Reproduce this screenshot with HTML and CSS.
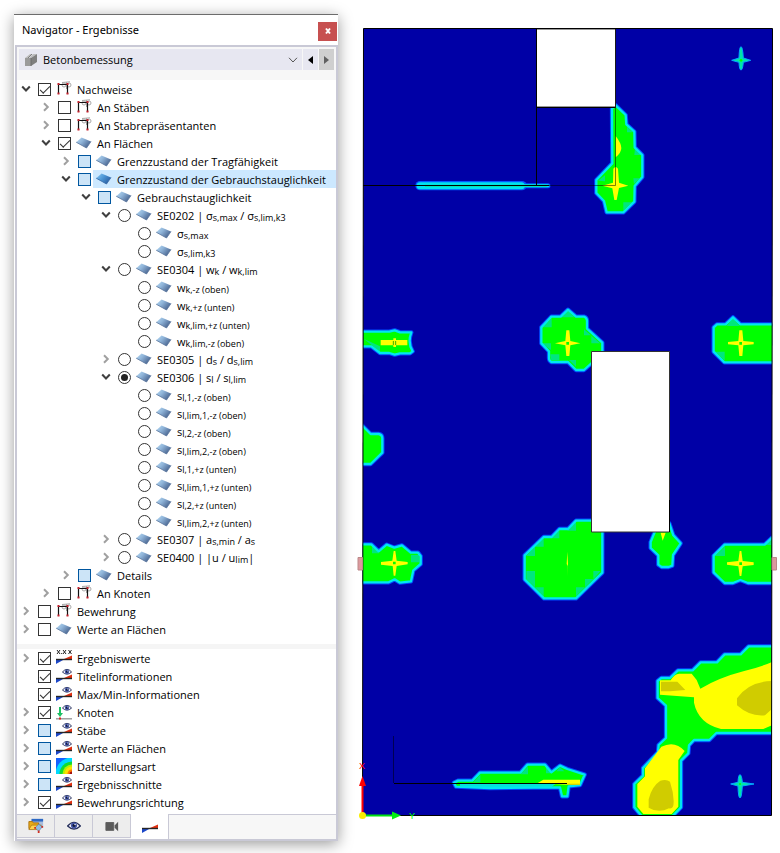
FILE: index.html
```html
<!DOCTYPE html>
<html lang="de">
<head>
<meta charset="utf-8">
<title>Navigator - Ergebnisse</title>
<link rel="stylesheet" href="styles.css">
</head>
<body>
<svg class="defs" aria-hidden="true">
  <defs>
    <linearGradient id="blueFace" x1="0" y1="0" x2="1" y2="0.6">
      <stop offset="0" stop-color="#b9dcf4"/><stop offset="0.45" stop-color="#8fb4d9"/><stop offset="1" stop-color="#49648f"/>
    </linearGradient>
    <linearGradient id="brightFace" x1="0" y1="0" x2="1" y2="0.6">
      <stop offset="0" stop-color="#8ccaf4"/><stop offset="0.5" stop-color="#4d97d6"/><stop offset="1" stop-color="#2a5fa3"/>
    </linearGradient>
    <symbol id="open" viewBox="0 0 10 8"><path d="M1.2 1.5 5 5.5 8.800 1.500" fill="none" stroke="#404040" stroke-width="2"/></symbol>
    <symbol id="closed" viewBox="0 0 10 10"><path d="M3 1.200 6.800 5 3 8.800" fill="none" stroke="#a0a0a0" stroke-width="2"/></symbol>
    <symbol id="surface" viewBox="0 0 16 16"><path d="M.2 7.200 5.600 2.500 15 6.500 10.500 13Z" fill="url(#blueFace)"/><path d="M.2 7.200 10.500 13 15 6.500" fill="none" stroke="#58749c" stroke-width=".8"/></symbol>
    <symbol id="surfaceOn" viewBox="0 0 16 16"><path d="M.2 7.200 5.600 2.500 15 6.500 10.500 13Z" fill="url(#brightFace)"/><path d="M.2 7.200 10.500 13 15 6.500" fill="none" stroke="#3567a5" stroke-width=".8"/></symbol>
    <symbol id="frame" viewBox="0 0 16 16">
      <g fill="none" stroke="#a9a9a9"><circle cx="8" cy="4" r="2"/><circle cx="13" cy="4" r="2"/><path d="M6 1.500 14 .8M10.500 1v7"/></g>
      <path d="M2.500 13V3.500H11.500V13" fill="none" stroke="#111" stroke-width="1.200"/>
      <path d="M1.500 2h2v2h-2zM10.500 2h2v2h-2zM1.500 11.500h2v2h-2zM10.500 11.500h2v2h-2z" fill="#c4202c"/>
    </symbol>
    <symbol id="wedge" viewBox="0 0 16 16"><path d="M0 9.500H8L0 14Z" fill="#1c47c8"/><path d="M8 9 16 5.500V9Z" fill="#e03010"/><path d="M0 9.500H16" stroke="#252525" stroke-width="1.400"/></symbol>
    <symbol id="eye" viewBox="0 0 16 12"><path d="M.7 6Q8-2.500 15.300 6 8 13 .7 6Z" fill="#f4f4fa" stroke="#26305c" stroke-width="1.500"/><circle cx="8" cy="5.500" r="3.500" fill="#4456a8"/><circle cx="8" cy="5.500" r="1.700" fill="#101838"/><circle cx="9.200" cy="4.200" r=".8" fill="#fff"/></symbol>
    <symbol id="wedgeEye" viewBox="0 0 16 16"><use href="#wedge" width="16" height="16" y="1"/><use href="#eye" x="6" y="0" width="10" height="8"/></symbol>
    <symbol id="values" viewBox="0 0 16 16"><use href="#wedge" width="16" height="16"/><path d="M1 0l3 4M4 0 1 4M7 0l3 4M10 0 7 4M12.500 0l3 4M15.500 0l-3 4M5.200 3.500h1" fill="none" stroke="#222" stroke-width="1"/></symbol>
    <symbol id="node" viewBox="0 0 16 16"><path d="M3 3h2v6h2L4 13 1 9h2z" fill="#1cc064"/><path d="M0 14.800h16" stroke="#999" stroke-width="1.400"/><path d="M3 13.500h2v2H3z" fill="#d22"/><use href="#eye" x="6" y="0" width="10" height="8"/></symbol>
    <symbol id="colors" viewBox="0 0 16 16"><path d="M0 0h16v16H0z" fill="#1460ff"/><circle cx="16" cy="16" r="16.500" fill="#00d8ff"/><circle cx="16" cy="16" r="12.500" fill="#10dc30"/><circle cx="16" cy="16" r="9.500" fill="#b8f000"/><circle cx="16" cy="16" r="7.500" fill="#ffe000"/><circle cx="16" cy="16" r="4.500" fill="#ff7a00"/><circle cx="16" cy="16" r="2.500" fill="#a01010"/></symbol>
    <symbol id="beam" viewBox="0 0 14 14"><path d="M1 5h6v8H1z" fill="#9a9a9a"/><path d="M1 5 6 1h2L4 5zM5 5l4-4h4L7 5z" fill="#bdbdbd"/><path d="M7 5l6-4v8l-6 4z" fill="#808080"/><path d="M4 5 8 1M7 5v8" stroke="#686868" fill="none" stroke-width=".8"/></symbol>
    <symbol id="folder" viewBox="0 0 18 18"><path d="M4 1h13v10H4z" fill="#a8bcdc"/><path d="M4 1h13v3H4z" fill="#2c68c4"/><path d="M1 4h4l1 1.500h6V12H1z" fill="#e8ac18" stroke="#a86c08"/><path d="M4 8h11l-3 5H1z" fill="#ffd450" stroke="#a86c08" stroke-width=".8"/><path d="M8 11l4-4 4 3-4 5z" fill="#8fbce4" stroke="#4a79a8" stroke-width=".6"/><path d="M7 10h2v2H7zM15 9h2v2h-2zM11 14h2v3h-2z" fill="#d03020"/></symbol>
    <symbol id="camera" viewBox="0 0 16 12"><path d="M1 2h9v9H1z" fill="#5b5b5b" stroke="#5b5b5b" stroke-linejoin="round"/><path d="M11 5.500 15 1v11l-4-4z" fill="#5b5b5b"/></symbol>
  </defs>
</svg>

<aside class="panel">
  <header class="title"><h1>Navigator - Ergebnisse</h1><button class="close" aria-label="Schließen"><svg viewBox="0 0 8 8"><path d="M2 1.500l4 5M6 1.500l-4 5"/></svg></button></header>

  <div class="body">
    <div class="toolbar">
      <div class="combo">
        <svg class="beam"><use href="#beam"/></svg>
        <select aria-label="Bemessung"><option>Betonbemessung</option></select>
        <svg class="arrow" viewBox="0 0 10 6"><path d="M1 .8 5 5 9 .8"/></svg>
      </div>
      <button class="step" aria-label="Zurück"><svg viewBox="0 0 5 8"><path d="M5 0v8L0 4z"/></svg></button>
      <button class="step next" aria-label="Weiter"><svg viewBox="0 0 5 8"><path d="M0 0v8l5-4z"/></svg></button>
    </div>

    <ul class="tree">
      <li><div class="row"><button aria-label="Zuklappen"><svg><use href="#open"/></svg></button><label><input type="checkbox" checked><span class="cap"><svg><use href="#frame"/></svg><span>Nachweise</span></span></label></div>
        <ul>
          <li><div class="row"><button aria-label="Aufklappen"><svg><use href="#closed"/></svg></button><label><input type="checkbox"><span class="cap"><svg><use href="#frame"/></svg><span>An Stäben</span></span></label></div></li>
          <li><div class="row"><button aria-label="Aufklappen"><svg><use href="#closed"/></svg></button><label><input type="checkbox"><span class="cap"><svg><use href="#frame"/></svg><span>An Stabrepräsentanten</span></span></label></div></li>
          <li><div class="row"><button aria-label="Zuklappen"><svg><use href="#open"/></svg></button><label><input type="checkbox" checked><span class="cap"><svg><use href="#surface"/></svg><span>An Flächen</span></span></label></div>
            <ul>
              <li><div class="row"><button aria-label="Aufklappen"><svg><use href="#closed"/></svg></button><label><input type="checkbox" class="mixed"><span class="cap"><svg><use href="#surface"/></svg><span>Grenzzustand der Tragfähigkeit</span></span></label></div></li>
              <li><div class="row selected"><button aria-label="Zuklappen"><svg><use href="#open"/></svg></button><label><input type="checkbox" class="mixed"><span class="cap"><svg><use href="#surfaceOn"/></svg><span>Grenzzustand der Gebrauchstauglichkeit</span></span></label></div>
                <ul>
                  <li><div class="row"><button aria-label="Zuklappen"><svg><use href="#open"/></svg></button><label><input type="checkbox" class="mixed"><span class="cap"><svg><use href="#surface"/></svg><span>Gebrauchstauglichkeit</span></span></label></div>
                    <ul>
                      <li><div class="row"><button aria-label="Zuklappen"><svg><use href="#open"/></svg></button><label><input type="radio" name="result"><span class="cap"><svg><use href="#surface"/></svg><span>SE0202 | <i>σ</i><sub>s,max</sub> / <i>σ</i><sub>s,lim,k3</sub></span></span></label></div>
                        <ul>
                          <li><div class="row leaf"><label><input type="radio" name="result"><span class="cap"><svg><use href="#surface"/></svg><span><i>σ</i><sub>s,max</sub></span></span></label></div></li>
                          <li><div class="row leaf"><label><input type="radio" name="result"><span class="cap"><svg><use href="#surface"/></svg><span><i>σ</i><sub>s,lim,k3</sub></span></span></label></div></li>
                        </ul>
                      </li>
                      <li><div class="row"><button aria-label="Zuklappen"><svg><use href="#open"/></svg></button><label><input type="radio" name="result"><span class="cap"><svg><use href="#surface"/></svg><span>SE0304 | <i>w</i><sub>k</sub> / <i>w</i><sub>k,lim</sub></span></span></label></div>
                        <ul>
                          <li><div class="row leaf"><label><input type="radio" name="result"><span class="cap"><svg><use href="#surface"/></svg><span><i>w</i><sub>k,-z (oben)</sub></span></span></label></div></li>
                          <li><div class="row leaf"><label><input type="radio" name="result"><span class="cap"><svg><use href="#surface"/></svg><span><i>w</i><sub>k,+z (unten)</sub></span></span></label></div></li>
                          <li><div class="row leaf"><label><input type="radio" name="result"><span class="cap"><svg><use href="#surface"/></svg><span><i>w</i><sub>k,lim,+z (unten)</sub></span></span></label></div></li>
                          <li><div class="row leaf"><label><input type="radio" name="result"><span class="cap"><svg><use href="#surface"/></svg><span><i>w</i><sub>k,lim,-z (oben)</sub></span></span></label></div></li>
                        </ul>
                      </li>
                      <li><div class="row"><button aria-label="Aufklappen"><svg><use href="#closed"/></svg></button><label><input type="radio" name="result"><span class="cap"><svg><use href="#surface"/></svg><span>SE0305 | <i>d</i><sub>s</sub> / <i>d</i><sub>s,lim</sub></span></span></label></div></li>
                      <li><div class="row"><button aria-label="Zuklappen"><svg><use href="#open"/></svg></button><label><input type="radio" name="result" checked><span class="cap"><svg><use href="#surface"/></svg><span>SE0306 | <i>s</i><sub>l</sub> / <i>s</i><sub>l,lim</sub></span></span></label></div>
                        <ul>
                          <li><div class="row leaf"><label><input type="radio" name="result"><span class="cap"><svg><use href="#surface"/></svg><span><i>s</i><sub>l,1,-z (oben)</sub></span></span></label></div></li>
                          <li><div class="row leaf"><label><input type="radio" name="result"><span class="cap"><svg><use href="#surface"/></svg><span><i>s</i><sub>l,lim,1,-z (oben)</sub></span></span></label></div></li>
                          <li><div class="row leaf"><label><input type="radio" name="result"><span class="cap"><svg><use href="#surface"/></svg><span><i>s</i><sub>l,2,-z (oben)</sub></span></span></label></div></li>
                          <li><div class="row leaf"><label><input type="radio" name="result"><span class="cap"><svg><use href="#surface"/></svg><span><i>s</i><sub>l,lim,2,-z (oben)</sub></span></span></label></div></li>
                          <li><div class="row leaf"><label><input type="radio" name="result"><span class="cap"><svg><use href="#surface"/></svg><span><i>s</i><sub>l,1,+z (unten)</sub></span></span></label></div></li>
                          <li><div class="row leaf"><label><input type="radio" name="result"><span class="cap"><svg><use href="#surface"/></svg><span><i>s</i><sub>l,lim,1,+z (unten)</sub></span></span></label></div></li>
                          <li><div class="row leaf"><label><input type="radio" name="result"><span class="cap"><svg><use href="#surface"/></svg><span><i>s</i><sub>l,2,+z (unten)</sub></span></span></label></div></li>
                          <li><div class="row leaf"><label><input type="radio" name="result"><span class="cap"><svg><use href="#surface"/></svg><span><i>s</i><sub>l,lim,2,+z (unten)</sub></span></span></label></div></li>
                        </ul>
                      </li>
                      <li><div class="row"><button aria-label="Aufklappen"><svg><use href="#closed"/></svg></button><label><input type="radio" name="result"><span class="cap"><svg><use href="#surface"/></svg><span>SE0307 | <i>a</i><sub>s,min</sub> / <i>a</i><sub>s</sub></span></span></label></div></li>
                      <li><div class="row"><button aria-label="Aufklappen"><svg><use href="#closed"/></svg></button><label><input type="radio" name="result"><span class="cap"><svg><use href="#surface"/></svg><span>SE0400 | |<i>u</i> / <i>u</i><sub>lim</sub>|</span></span></label></div></li>
                    </ul>
                  </li>
                </ul>
              </li>
              <li><div class="row"><button aria-label="Aufklappen"><svg><use href="#closed"/></svg></button><label><input type="checkbox" class="mixed"><span class="cap"><svg><use href="#surface"/></svg><span>Details</span></span></label></div></li>
            </ul>
          </li>
          <li><div class="row"><button aria-label="Aufklappen"><svg><use href="#closed"/></svg></button><label><input type="checkbox"><span class="cap"><svg><use href="#frame"/></svg><span>An Knoten</span></span></label></div></li>
        </ul>
      </li>
      <li><div class="row"><button aria-label="Aufklappen"><svg><use href="#closed"/></svg></button><label><input type="checkbox"><span class="cap"><svg><use href="#frame"/></svg><span>Bewehrung</span></span></label></div></li>
      <li><div class="row"><button aria-label="Aufklappen"><svg><use href="#closed"/></svg></button><label><input type="checkbox"><span class="cap"><svg><use href="#surface"/></svg><span>Werte an Flächen</span></span></label></div></li>
    </ul>

    <ul class="tree options">
      <li><div class="row"><button aria-label="Aufklappen"><svg><use href="#closed"/></svg></button><label><input type="checkbox" checked><span class="cap"><svg><use href="#values"/></svg><span>Ergebniswerte</span></span></label></div></li>
      <li><div class="row leaf"><label><input type="checkbox" checked><span class="cap"><svg><use href="#wedgeEye"/></svg><span>Titelinformationen</span></span></label></div></li>
      <li><div class="row leaf"><label><input type="checkbox" checked><span class="cap"><svg><use href="#wedgeEye"/></svg><span>Max/Min-Informationen</span></span></label></div></li>
      <li><div class="row"><button aria-label="Aufklappen"><svg><use href="#closed"/></svg></button><label><input type="checkbox" checked><span class="cap"><svg><use href="#node"/></svg><span>Knoten</span></span></label></div></li>
      <li><div class="row"><button aria-label="Aufklappen"><svg><use href="#closed"/></svg></button><label><input type="checkbox" class="mixed"><span class="cap"><svg><use href="#wedgeEye"/></svg><span>Stäbe</span></span></label></div></li>
      <li><div class="row"><button aria-label="Aufklappen"><svg><use href="#closed"/></svg></button><label><input type="checkbox" class="mixed"><span class="cap"><svg><use href="#wedgeEye"/></svg><span>Werte an Flächen</span></span></label></div></li>
      <li><div class="row"><button aria-label="Aufklappen"><svg><use href="#closed"/></svg></button><label><input type="checkbox" class="mixed"><span class="cap"><svg><use href="#colors"/></svg><span>Darstellungsart</span></span></label></div></li>
      <li><div class="row"><button aria-label="Aufklappen"><svg><use href="#closed"/></svg></button><label><input type="checkbox" class="mixed"><span class="cap"><svg><use href="#wedgeEye"/></svg><span>Ergebnisschnitte</span></span></label></div></li>
      <li><div class="row"><button aria-label="Aufklappen"><svg><use href="#closed"/></svg></button><label><input type="checkbox" checked><span class="cap"><svg><use href="#wedgeEye"/></svg><span>Bewehrungsrichtung</span></span></label></div></li>
    </ul>

    <nav class="tabs">
      <button aria-label="Daten"><svg><use href="#folder"/></svg></button>
      <button aria-label="Anzeige"><svg class="low"><use href="#eye"/></svg></button>
      <button aria-label="Ansichten"><svg class="low"><use href="#camera"/></svg></button>
      <button class="active" aria-label="Ergebnisse"><svg><use href="#wedge"/></svg></button>
    </nav>
  </div>
</aside>

<main>
  <svg class="model" viewBox="350 0 430 853" role="img" aria-label="Ergebnisverlauf der Platte">
    <defs>
      <clipPath id="slab"><path d="M363.500 28.500H772.500L771.500 815.500H362.500Z"/></clipPath>
      <g id="areas">
        <g transform="translate(350 0) scale(.33333)">
          <path d="M797 316 827 345 829 373 853 395 854 442 877 465V531L854 558 853 605 820 637H770L762 603 739 579V540L787 490 786 326Z"/>
        </g>
        <g transform="translate(350 290) scale(.33333)">
          <path d="M20 125H118L134 121 150 127H184Q172 158 188 184L180 190H150L134 194 118 189H90L64 169H20Z"/>
          <path d="M20 390 62 432H86Q97 434 97 445V488L62 522H20Z"/>
          <path d="M574 112 604 80H632L654 59 678 80H702Q710 82 711 92V116L757 158V190L702 240H678L654 216H604Q597 212 597 204V184L574 160Z"/>
          <path d="M1091 112 1101 103H1127L1149 82 1171 103H1290V217H1123L1091 185Z"/>
          <path d="M20 763H64L86 784 110 764 133 773 156 766 182 788H204L212 798V822L190 841 183 874 150 878 134 868 116 877H20Z"/>
          <path d="M581 741H605L628 717H654L678 692H757V848L678 925H582L524 868V796Z"/>
          <path d="M925 700H958L970 736 992 760 969 795 967 827 956 831H935L925 824V796L902 774V756Z"/>
          <path d="M1124 764H1244L1290 720V879H1194L1171 870 1149 879H1124L1091 847V797Z"/>
        </g>
        <g transform="translate(350 630) scale(.33333)">
          <path d="M312 458 324 452H367L390 428H511L532 404H585L604 427 630 407 652 417 704 434 690 465 656 469 652 499H636L630 472 420 474 318 470Z"/>
          <path d="M1290 49H1196L1172 73H1124L1101 97H1052L1028 121H984L960 144H934L923 153V204L948 227V324L926 345 924 367 879 414V437L853 462V532L878 562H964L993 532V392L1015 370 1017 346 1032 330H1078L1099 309H1290Z"/>
        </g>
      </g>
    </defs>
    <path class="slab" d="M363.500 28.500H772.500L771.500 815.500H362.500Z"/>
    <g clip-path="url(#slab)">
      <use href="#areas" class="halo"/>
      <use href="#areas" class="zone"/>
      <g transform="translate(350 0) scale(.33333)">
        <path class="bar-halo" d="M210 557H516"/><path class="thin-halo" d="M516 557H594"/>
        <path class="bar" d="M210 557H514"/><path class="thin" d="M514 557H594"/><path class="core" d="M225 557H590"/>
        <path class="spark" d="M1173 140Q1178 140 1180 174L1202 181 1180 187Q1178 210 1173 210T1167 187L1145 181 1167 174Q1168 140 1173 140Z"/>
        <circle class="zone" cx="1173" cy="181" r="4"/>
        <path class="teal" d="M855 445 873 465H853ZM850 535H869L852 552ZM820 607H846L820 631ZM744 542 765 526V544ZM831 380 848 397H831Z"/>
      </g>
      <g transform="translate(350 290) scale(.33333)">
        <path class="teal" d="M654 63 673 82H634ZM605 85V112H580ZM575 160H603V180ZM601 193H628V211H604ZM702 118 750 160H724V136H702ZM657 210H678V230ZM1149 86 1168 108H1130ZM1096 185H1124V211ZM1245 765 1264 745V765ZM1096 798H1125V770ZM581 745V770H555ZM628 722V745H605ZM678 697V722H652ZM529 798 555 770V798ZM529 867V843H555V892ZM581 919V892H555ZM678 919V892H705ZM705 892V867H730ZM730 867V843H752ZM41 146 90 169V185ZM66 770 88 790H66ZM183 795H208V817H183Z"/>
      </g>
      <g transform="translate(350 630) scale(.33333)">
        <path class="teal" d="M370 457 391 434V457ZM512 433 534 410V433ZM588 410 604 430H588ZM619 424 630 412 643 424Z"/>
        <path class="cyan" d="M330 460H620L600 474H330Z"/>
      </g>
      <use href="#areas" class="edge"/>
      <g transform="translate(350 0) scale(.33333)">
        <path class="yellow" d="M797 408Q814 430 814 444T797 472Z"/>
        <path class="yellow" d="M790 506Q797 496 804 506L807 548 835 557 807 564 800 600H793L787 565 757 557 789 548Z"/>
      </g>
      <g transform="translate(350 290) scale(.33333)">
        <path class="yellow" d="M92 150H130V145H138V150H172V166H138V171H130V166H92Z"/><path class="dots" d="M130 153V165M137 153V165"/>
        <path class="yellow" d="M649 121H658L661 153 691 160 661 166 658 198H649L646 166 615 160 646 153Z"/>
        <path class="yellow" d="M1168 121H1177L1180 153 1211 156V163L1180 166 1177 198H1168L1165 166 1134 163V156L1165 153Z"/>
        <path class="yellow" d="M131 783H136L140 812 173 816V823L140 828 136 857H131L128 828 93 824V816L127 812Z"/>
        <path class="yellow" d="M1169 783H1174L1178 813 1211 817V825L1178 829 1174 858H1169L1165 829 1131 824V817L1165 813Z"/>
        <path class="yellow" d="M932 728H947L938 752ZM652 785 654 820 652 858 653 828 650 822Z"/>
        <path class="green-dot" d="M649 156H657V164H649ZM1168 156H1176V164H1168ZM129 815H137V823H129ZM1168 817H1176V825H1168Z"/>
      </g>
      <g transform="translate(350 630) scale(.33333)">
        <path class="yellow" d="M562 460 580 449H690V464H650ZM930 151H962Q973 132 988 131H1025L1040 150 1051 176Q1110 142 1180 124T1290 85V275L1240 297H1113Q1045 280 1032 218V202L930 194ZM934 350Q975 330 1004 363L985 390V530L965 552H880L862 530V462L885 439V415Z"/>
        <path class="olive" d="M933 155H982L1006 180 960 184H933ZM1161 205Q1195 155 1265 153V238L1245 256Q1200 261 1161 226ZM931 452Q950 447 960 455 970 485 971 512T957 535Q925 551 896 533V508Q905 469 931 452ZM650 461H690V464H650Z"/>
        <path class="spark" d="M1170 434Q1175 434 1177 457L1212 462 1177 468Q1175 504 1170 504T1164 468L1142 462 1164 457Q1165 434 1170 434Z"/>
        <circle class="zone" cx="1170" cy="462" r="3"/>
      </g>
    </g>
    <path class="opening" d="M536.500 29H615.500V107H536.500ZM591.500 351.500H669.500V532H591.500Z"/>
    <path class="line" d="M363.500 28.500H772.500L771.500 815.500H362.500ZM536.500 29V185M536.500 107.500H615.500M363 185.500H549M669.500 500V532M394 783.500H567"/>
    <path class="faint" d="M549 185.500H615.500V29M393.500 736V783"/>
    <path class="support" d="M358 557.500H362.500V570H358ZM772 557.500H776.500V570H772Z"/>
    <g class="axes">
      <path d="M362.500 815V785" stroke="#f00" stroke-width="2"/><path d="M362.500 776 366 786H359Z" fill="#f00"/>
      <path d="M362.500 815.500H393" stroke="#00e010" stroke-width="2"/><path d="M401 815.500 392 811.500V819.500Z" fill="#00f010"/>
      <circle cx="362.500" cy="815.500" r="3.500" fill="#f8ee00"/>
      <text x="359" y="769" fill="#f00">X</text><text x="409" y="819" fill="#0f0">Y</text>
    </g>
  </svg>
</main>
</body>
</html>
```
FILE: styles.css
```css
* { box-sizing: border-box; }

body {
  margin: 0;
  display: grid;
  grid-template-columns: 350px 1fr;
  align-items: start;
  background: #fff;
  color: #000;
  font: 11px/18px "Open Sans", "Noto Sans", sans-serif;
}

button, select, input { font: inherit; color: inherit; margin: 0; padding: 0; border: 0; }
.defs { position: absolute; width: 0; height: 0; }

.panel {
  margin: 14px 12px 12px 14px;
  border-top: 1px solid #6c6c6c;
  background: #fff;
  box-shadow: 0 3px 14px rgba(0, 0, 0, 0.4);
}

.title {
  display: flex;
  align-items: center;
  justify-content: space-between;
  height: 30px;
  padding: 0 1px 0 8px;
}
.title h1 { margin: 0; font: 400 11px/18px "Noto Sans", sans-serif; }
.close { display: grid; place-items: center; width: 19px; height: 19px; background: #c75050; margin-top: 2px; }
.close svg { width: 8px; height: 8px; fill: none; stroke: #fff; stroke-width: 2; }

.body { margin-left: 1px; border: 2px solid #c9c9d6; }

.toolbar {
  display: flex;
  gap: 1px;
  height: 33px;
  padding: 2px 2px 10px;
  background: #f7f7f7;
}
.combo {
  flex: 1;
  display: flex;
  align-items: center;
  padding: 0 4px 0 5px;
  gap: 5px;
  background: #e7e7f1;
}
.combo select { flex: 1; min-width: 0; appearance: none; background: none; height: 20px; }
.beam { width: 14px; height: 14px; }
.arrow { width: 10px; height: 6px; fill: none; stroke: #555; }
.step { display: grid; place-items: center; width: 15px; background: #e7e7f1; }
.step svg { width: 5px; height: 8px; }
.step.next { background: #cfcfcf; }
.step.next svg { fill: #606060; }

.tree, .tree ul { list-style: none; margin: 0; padding: 0; }
.tree ul { padding-left: 20px; }
.tree { padding: 0 0 6px 4px; }
.options { border-top: 5px solid #f5f5f5; padding-bottom: 3px; }

.row { display: flex; height: 18px; }
.row button { width: 17px; height: 18px; background: none; display: flex; align-items: center; }
.row button svg { width: 10px; height: 10px; }
.row.leaf { padding-left: 17px; }
.row label { flex: 1; display: flex; align-items: center; min-width: 0; white-space: nowrap; }
.cap { flex: 1; display: flex; align-items: center; gap: 5px; height: 18px; margin-left: 2px; padding-left: 3px; }
.cap svg { width: 16px; height: 16px; flex: none; }
.cap > span { padding-top: 2px; }
.selected .cap { background: #cce8ff; }

.row i { font-style: normal; }
.row sub { font-size: 9px; line-height: 0; vertical-align: -1px; }

input { appearance: none; flex: none; width: 13px; height: 13px; border: 1px solid #333; background: #fff; }
input.mixed { border-color: #00569f; background: #cce4f7; }
input[type="checkbox"]:checked::before {
  content: "";
  display: block;
  width: 9px;
  height: 4px;
  margin: 2px 1px;
  border: solid #333;
  border-width: 0 0 1px 1px;
  transform: rotate(-45deg);
}
input[type="radio"] { border-radius: 50%; }
input[type="radio"]:checked::before {
  content: "";
  display: block;
  width: 7px;
  height: 7px;
  margin: 2px;
  border-radius: 50%;
  background: #222;
}

.tabs { display: flex; align-items: start; height: 25px; background: #f7f7f7; box-shadow: inset 0 1px #c9c9d6; }
.tabs button {
  display: grid;
  place-items: center;
  width: 38px;
  height: 24px;
  background: #ededed;
  border: solid #c9c9d6;
  border-width: 1px 1px 1px 0;
}
.tabs .active { height: 25px; background: #fff; border-width: 0 1px 0 0; }
.tabs svg { width: 16px; height: 16px; }
.tabs svg.low { width: 14px; height: 12px; }

.model { display: block; width: 100%; height: auto; }
.slab { fill: #0000a6; }
.halo { fill: #0048ff; stroke: #0048ff; stroke-width: 13px; stroke-linejoin: round; }
.edge { fill: none; stroke: #00e6f0; stroke-width: 7px; stroke-linejoin: round; }
.zone, .green-dot { fill: #0f0; }
.teal { fill: #00e67e; }
.cyan { fill: #00e4d8; }
.yellow { fill: #ff0; }
.olive { fill: #d0cc00; }
.dots { stroke: #3cb000; stroke-width: 3px; }
.bar-halo { stroke: #0058ff; stroke-width: 28px; stroke-linecap: round; }
.thin-halo { stroke: #0058ff; stroke-width: 15px; stroke-linecap: round; }
.bar { stroke: #00e0f0; stroke-width: 21px; stroke-linecap: round; }
.thin { stroke: #00e0f0; stroke-width: 9px; stroke-linecap: round; }
.core { stroke: #00e6a0; stroke-width: 6px; }
.spark { fill: #00e6a8; stroke: #00a8ff; stroke-width: 3px; }
.opening { fill: #fff; stroke: #333; stroke-width: 1px; }
.line { fill: none; stroke: #000; stroke-width: 1px; }
.faint { fill: none; stroke: rgba(0, 0, 0, 0.5); stroke-width: 1px; }
.support { fill: #dc9a9e; stroke: #b88; stroke-width: 1px; }
.axes text { font: 9px "Liberation Sans", sans-serif; }
```
